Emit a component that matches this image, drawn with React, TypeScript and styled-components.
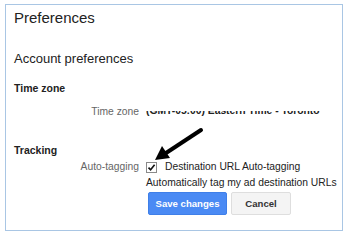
import React from 'react';
import styled, { createGlobalStyle } from 'styled-components';

const GlobalStyle = createGlobalStyle`
  body {
    margin: 0;
    background: #fff;
    font-family: "Liberation Sans", Arial, sans-serif;
  }
`;

const Panel = styled.div`
  position: relative;
  box-sizing: border-box;
  margin: 4px 0 0 5px;
  width: 338px;
  height: 227px;
  border: 1px solid #a9c6e4;
  padding: 4px 8px 0 8px;
`;

const Title = styled.h1`
  margin: 0;
  font-size: 15px;
  font-weight: normal;
  line-height: 17px;
  color: #222;
`;

const SectionTitle = styled.h2`
  margin: 25px 0 0 0;
  font-size: 13px;
  font-weight: normal;
  line-height: 15px;
  color: #222;
`;

const GroupTitle = styled.h3<{ gap: number }>`
  margin: ${p => p.gap}px 0 0 0;
  font-size: 10.5px;
  font-weight: bold;
  line-height: 12px;
  color: #222;
`;

const FieldRow = styled.div<{ gap: number }>`
  display: grid;
  grid-template-columns: 125px 1fr;
  column-gap: 7px;
  margin-top: ${p => p.gap}px;
  font-size: 10.3px;
  line-height: 12px;
  white-space: nowrap;
`;

const Label = styled.div`
  text-align: right;
  color: #666;
`;

const Control = styled.div`
  display: flex;
  flex-direction: column;
  color: #222;
`;

const ClippedValue = styled.div`
  height: 6px;
  overflow: hidden;
  display: flex;
  align-items: flex-end;
  margin-top: 5px;
  span {
    font-weight: bold;
    line-height: 12px;
    color: #222;
  }
`;

const CheckLine = styled.label`
  display: flex;
  align-items: center;
  gap: 8px;
`;

const Box = styled.span`
  box-sizing: border-box;
  width: 11px;
  height: 11px;
  border: 1px solid #8a8a8a;
  background: #fff;
  display: flex;
  align-items: center;
  justify-content: center;
`;

const Hint = styled.div`
  margin-top: 4px;
`;

const Actions = styled.div`
  display: flex;
  gap: 4px;
  margin-top: 3px;
  margin-left: 2px;
`;

const Button = styled.button<{ primary?: boolean }>`
  box-sizing: border-box;
  height: 23px;
  width: ${p => (p.primary ? 79 : 60)}px;
  padding: 0;
  border-radius: 2px;
  font-family: "Liberation Sans", Arial, sans-serif;
  font-size: 9.6px;
  font-weight: bold;
  background: ${p => (p.primary ? '#4a8af4' : '#f4f4f4')};
  color: ${p => (p.primary ? '#fff' : '#333')};
  border: 1px solid ${p => (p.primary ? '#3f7fe8' : '#dedede')};
`;

const Arrow = styled.svg`
  position: absolute;
  left: 144px;
  top: 120px;
`;

const App: React.FC = () => (
  <>
    <GlobalStyle />
    <Panel>
      <Title>Preferences</Title>
      <SectionTitle>Account preferences</SectionTitle>

      <GroupTitle gap={16}>Time zone</GroupTitle>
      <FieldRow gap={12}>
        <Label>Time zone</Label>
        <ClippedValue>
          <span>(GMT-05:00) Eastern Time - Toronto</span>
        </ClippedValue>
      </FieldRow>

      <GroupTitle gap={26}>Tracking</GroupTitle>
      <FieldRow gap={5}>
        <Label>Auto-tagging</Label>
        <Control>
          <CheckLine>
            <Box>
              <svg width="9" height="9" viewBox="0 0 9 9">
                <path d="M1.5 4.6 L3.6 6.8 L7.6 1.8" fill="none" stroke="#111" strokeWidth="1.6" />
              </svg>
            </Box>
            Destination URL Auto-tagging
          </CheckLine>
          <Hint>Automatically tag my ad destination URLs</Hint>
          <Actions>
            <Button primary>Save changes</Button>
            <Button>Cancel</Button>
          </Actions>
        </Control>
      </FieldRow>

      <Arrow width="56" height="40" viewBox="0 0 56 40">
        <line x1="51" y1="5" x2="16" y2="28" stroke="#000" strokeWidth="4" strokeLinecap="round" />
        <polygon points="5,35 20,33 12,21" fill="#000" />
      </Arrow>
    </Panel>
  </>
);

export default App;
